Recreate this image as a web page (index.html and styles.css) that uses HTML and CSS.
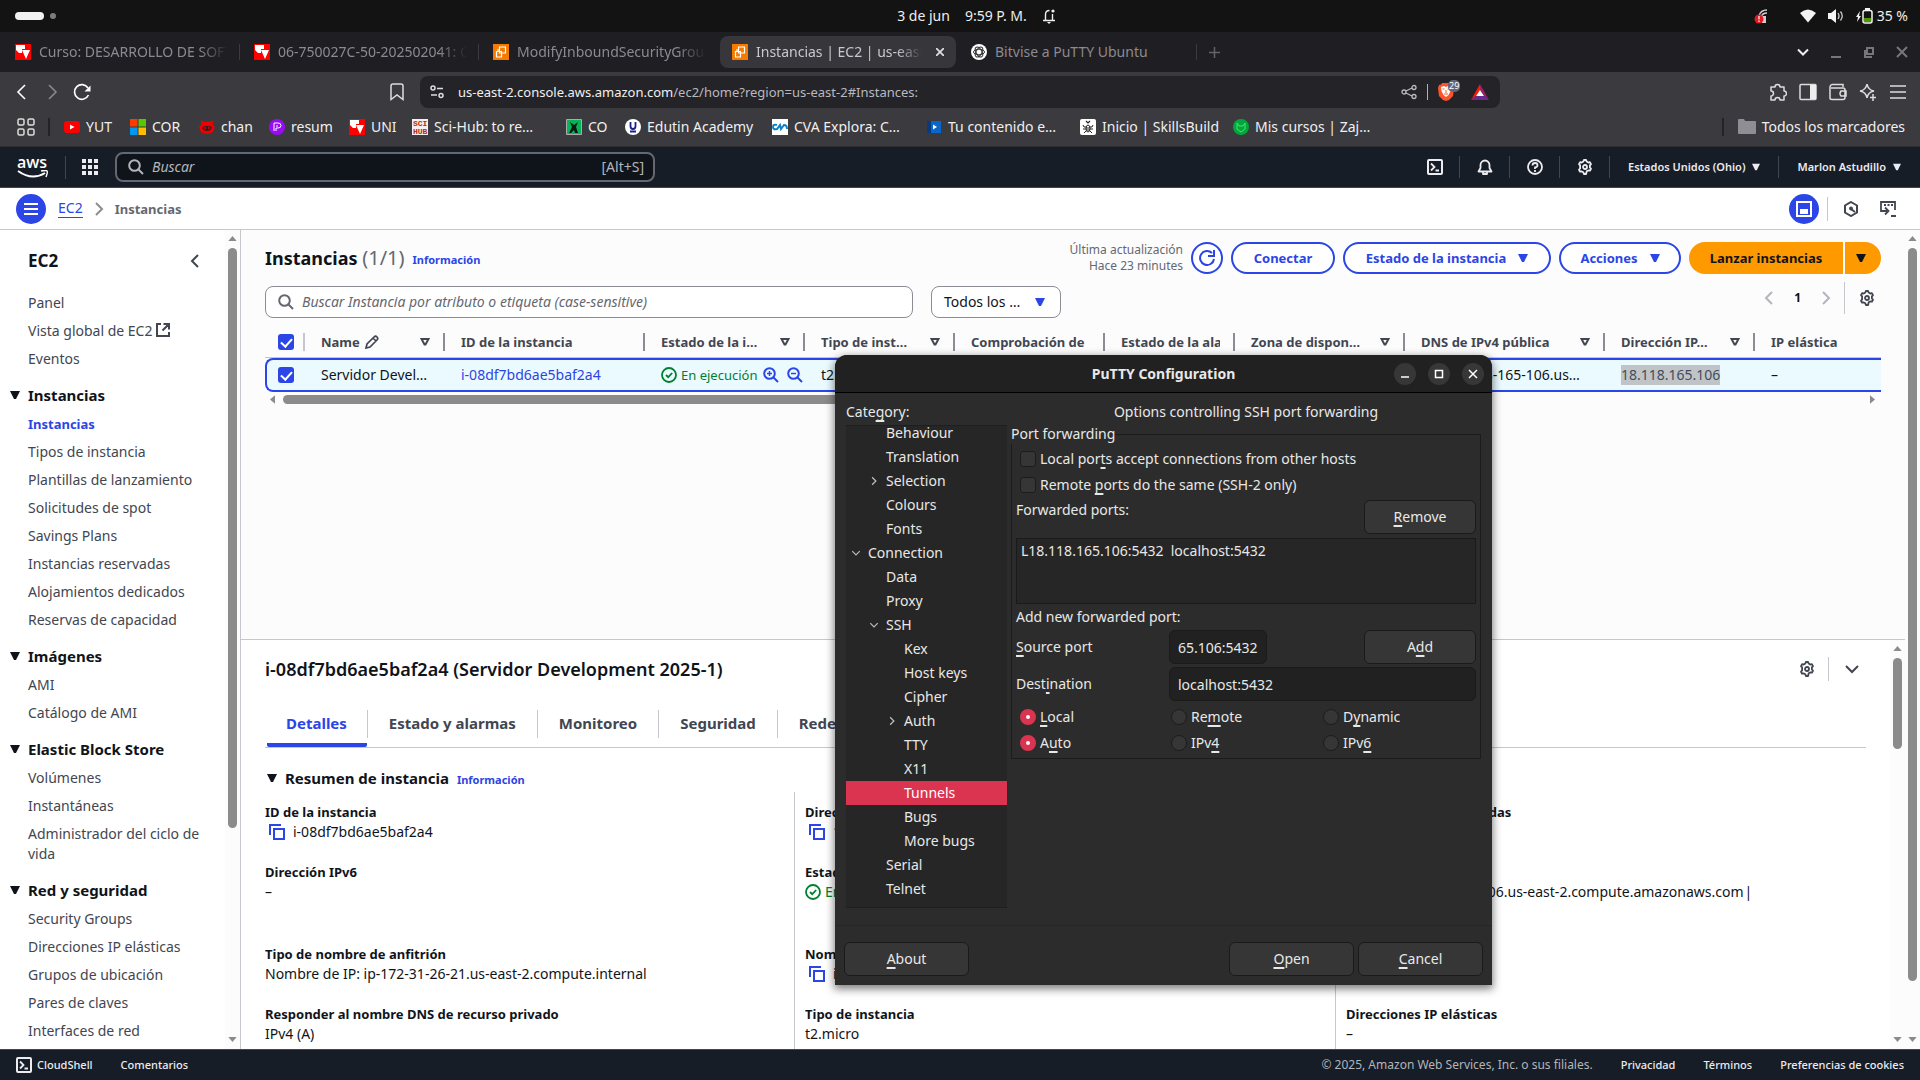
FILE: index.html
```html
<!DOCTYPE html>
<html lang="es">
<head>
<meta charset="utf-8">
<title>Instancias | EC2 | us-east-2</title>
<link rel="stylesheet" href="styles.css">
</head>
<body>
<svg class="sprite" aria-hidden="true">
  <symbol id="gear" viewBox="0 0 16 16"><path d="M6.3 2.6 6.9 1h2.2l.6 1.6 1.5.9 1.7-.3 1.1 1.9-1.1 1.3v1.2l0 .8 1.1 1.4-1.1 1.9-1.7-.3-1.5.9L9.1 15H6.9l-.6-1.7-1.5-.9-1.7.3L2 10.800l1.100-1.400V6.400L2 5.100l1.100-1.900 1.700.3z" fill="none" stroke="currentColor" stroke-width="1.8" stroke-linejoin="round"/><circle cx="8" cy="8" r="2" fill="none" stroke="currentColor" stroke-width="1.800"/></symbol>
  <symbol id="lens" viewBox="0 0 16 16"><circle cx="6.500" cy="6.500" r="5.300" fill="none" stroke="currentColor" stroke-width="2"/><path d="m10.500 10.500 4.500 4.500" stroke="currentColor" stroke-width="2"/></symbol>
  <symbol id="caret" viewBox="0 0 10 10"><path d="M0 1h10L6 9H4z" fill="currentColor"/></symbol>
  <symbol id="filter" viewBox="0 0 10 10"><path d="M1.500 2h7L5.500 7.500h-1z" fill="none" stroke="currentColor" stroke-width="2"/></symbol>
  <symbol id="left" viewBox="0 0 16 16"><path d="M11 2 5 8l6 6" fill="none" stroke="currentColor" stroke-width="2"/></symbol>
  <symbol id="right" viewBox="0 0 16 16"><path d="m5 2 6 6-6 6" fill="none" stroke="currentColor" stroke-width="2"/></symbol>
  <symbol id="down" viewBox="0 0 16 16"><path d="m2 5 6 6 6-6" fill="none" stroke="currentColor" stroke-width="2"/></symbol>
  <symbol id="copy" viewBox="0 0 16 16"><path d="M1 11V1h11" fill="none" stroke="currentColor" stroke-width="2"/><path d="M5 5h10v10H5z" fill="none" stroke="currentColor" stroke-width="2"/></symbol>
  <symbol id="ok" viewBox="0 0 16 16"><circle cx="8" cy="8" r="7" fill="none" stroke="currentColor" stroke-width="1.800"/><path d="m5 8 2.200 2.200L11.200 6" fill="none" stroke="currentColor" stroke-width="1.800"/></symbol>
  <symbol id="shell" viewBox="0 0 16 16"><rect x="1" y="1" width="14" height="14" rx="1" fill="none" stroke="currentColor" stroke-width="2"/><path d="m4 4.500 3.500 3.500L4 11.500M8.500 11.500H12" fill="none" stroke="currentColor" stroke-width="1.800"/></symbol>
  <symbol id="uv" viewBox="0 0 16 16"><path fill="#f00" d="M0 0h16v16H0z"/><path fill="#fff" d="M1 1h9v4H7v4H4L1 6zM7 6h8l-4 9z"/></symbol>
  <symbol id="ec2" viewBox="0 0 16 16"><path fill="#f47b00" d="M0 0h16v16H0z"/><path d="M6.500 3h6v6h-6zM3.500 7.500h5v5.500h-5zM5 7V5M13 5" fill="none" stroke="#fff" stroke-width="1.200"/></symbol>
  <symbol id="aleft" viewBox="0 0 6 10"><path d="M6 0v10L0 5z" fill="currentColor"/></symbol>
  <symbol id="aup" viewBox="0 0 10 6"><path d="M0 6h10L5 0z" fill="currentColor"/></symbol>
  <symbol id="adown" viewBox="0 0 10 6"><path d="M0 0h10L5 6z" fill="currentColor"/></symbol>
</svg>

<header class="desktop-bar">
  <div class="workspaces"><i class="pill"></i><i class="dot"></i></div>
  <div class="clock"><span>3 de jun</span><span>9:59 P. M.</span>
    <svg width="14" height="16" viewBox="0 0 14 16"><path d="M1 12.500h12M3.500 12V6.500C3.500 4 5 2.500 7.500 2.500M10.500 6v6" fill="none" stroke="#eee" stroke-width="1.400"/><circle cx="11" cy="3" r="1.600" fill="#eee"/><path d="M5 14h4l-2 2z" fill="#eee"/></svg></div>
  <div class="tray">
    <svg class="net" width="14" height="16" viewBox="0 0 14 16"><path d="M5 8c1-4 4-6 8-6M7 9c1-3 3-4 6-4" fill="none" stroke="#ccc" stroke-width="1.300"/><path d="M8 8h4v7H8z" fill="#ccc"/><circle cx="5" cy="11" r="4.500" fill="#e01b24"/><path d="M5 8v3.500M5 12.500V14" stroke="#fff" stroke-width="1.200"/></svg>
    <svg width="16" height="14" viewBox="0 0 16 14"><path d="M0 4q8-7 16 0L8 13.500z" fill="#f4f4f4"/></svg>
    <svg width="16" height="14" viewBox="0 0 16 14"><path d="M0 4h3l5-4v14l-5-4H0z" fill="#f4f4f4"/><path d="M10 4q2 3 0 6M12.500 2.500q3.500 4.500 0 9" fill="none" stroke="#ccc" stroke-width="1.300"/></svg>
    <span class="battery"><svg width="17" height="16" viewBox="0 0 17 16"><path d="M4 3 0 9h2l-1 5 4-6H3z" fill="#f4f4f4"/><rect x="7" y="2.500" width="9" height="12.500" rx="2" fill="none" stroke="#f4f4f4" stroke-width="1.500"/><path d="M9 0h5v2H9z" fill="#f4f4f4"/><path d="M8 10h7v4H8z" fill="#4e9a06"/></svg>35 %</span>
  </div>
</header>

<div class="tabstrip">
  <div class="tab sep"><svg width="16" height="16"><use href="#uv"/></svg><span>Curso: DESARROLLO DE SOFTWARE</span></div>
  <div class="tab sep"><svg width="16" height="16"><use href="#uv"/></svg><span>06-750027C-50-202502041: Clase</span></div>
  <div class="tab"><svg width="16" height="16"><use href="#ec2"/></svg><span>ModifyInboundSecurityGroupRules</span></div>
  <div class="tab active"><svg width="16" height="16"><use href="#ec2"/></svg><span>Instancias | EC2 | us-east-2</span><button aria-label="Cerrar"><svg width="8" height="8" viewBox="0 0 8 8"><path d="m0 0 8 8M8 0 0 8" stroke="#ddd" stroke-width="1.800"/></svg></button></div>
  <div class="tab sep last"><svg width="16" height="16" viewBox="0 0 16 16"><circle cx="8" cy="8" r="8" fill="#fff"/><g fill="none" stroke="#333"><ellipse cx="8" cy="8" rx="5.500" ry="2.800"/><ellipse cx="8" cy="8" rx="5.500" ry="2.800" transform="rotate(60 8 8)"/><ellipse cx="8" cy="8" rx="5.500" ry="2.800" transform="rotate(120 8 8)"/></g></svg><span>Bitvise a PuTTY Ubuntu</span></div>
  <button class="newtab" aria-label="Nueva pestaña"><svg width="11" height="11" viewBox="0 0 11 11"><path d="M0 5.500h11M5.500 0v11" stroke="#636268" stroke-width="1.500"/></svg></button>
  <div class="winctl">
    <svg width="12" height="12" viewBox="0 0 12 12"><path d="m1 3.500 5 5 5-5" fill="none" stroke="#eee" stroke-width="2"/></svg>
    <svg width="12" height="12" viewBox="0 0 12 12"><path d="M1 11h10" stroke="#77767b" stroke-width="2"/></svg>
    <svg width="12" height="12" viewBox="0 0 12 12"><path d="M4 2h6v6H4zM2 4v7h7" fill="none" stroke="#77767b" stroke-width="2"/></svg>
    <svg width="12" height="12" viewBox="0 0 12 12"><path d="m1 1 10 10M11 1 1 11" stroke="#77767b" stroke-width="2"/></svg>
  </div>
</div>

<div class="chrome">
  <div class="toolbar">
    <div class="navbtns">
      <svg width="18" height="18" viewBox="0 0 18 18"><path d="M12 2 5 9l7 7" fill="none" stroke="#fff" stroke-width="1.600"/></svg>
      <svg width="18" height="18" viewBox="0 0 18 18"><path d="m6 2 7 7-7 7" fill="none" stroke="#89888d" stroke-width="1.600"/></svg>
      <svg width="18" height="18" viewBox="0 0 18 18"><path d="M15.500 12A7.300 7.300 0 1 1 15 5" fill="none" stroke="#fff" stroke-width="1.700"/><path d="M17.500 2.500v6h-6z" fill="#fff"/></svg>
    </div>
    <svg class="mark" width="14" height="18" viewBox="0 0 14 18"><path d="M1 3a2 2 0 0 1 2-2h8a2 2 0 0 1 2 2v13.500l-6-4.500-6 4.500z" fill="none" stroke="#ddd" stroke-width="1.500"/></svg>
    <div class="urlbar">
      <svg width="14" height="14" viewBox="0 0 14 14"><g fill="none" stroke="#ddd" stroke-width="1.500"><circle cx="3" cy="3" r="2"/><path d="M7 3.500h6M1 10h6"/><circle cx="11" cy="10.500" r="2"/></g></svg>
      <span class="url"><b>us-east-2.console.aws.amazon.com</b>/ec2/home?region=us-east-2#Instances:</span>
      <svg width="16" height="16" viewBox="0 0 16 16"><g fill="none" stroke="#bbb" stroke-width="1.300"><circle cx="3" cy="8" r="2"/><circle cx="13" cy="3.500" r="2"/><circle cx="13" cy="12.500" r="2"/><path d="m5 7 6-3M5 9l6 3"/></g></svg>
      <i class="bar"></i>
      <span class="shield"><svg width="16" height="18" viewBox="0 0 16 18"><path d="m4 0h8l1 1.500 2 .500 1 3-1 8-4 4-3 1-3-1-4-4L0 5l1-3 2-.500z" fill="#fb542b"/><path d="m3 4 3-1 2 1 2-1 3 1-.500 4-2 4-2.500 2-2.500-2-2-4z" fill="#fff"/><path d="M4.500 6h2M9.500 6h2M8 7v3M6 11h4" stroke="#fb542b"/></svg><em>29</em></span>
      <svg width="18" height="16" viewBox="0 0 18 16"><path d="M9 0v6L5 12l-5 4z" fill="#ff1a00"/><path d="M9 0v6l4.500 6L18 16z" fill="#9e1f63"/><path d="M0 16 5 11.500h8L18 16z" fill="#662d91"/><path d="m9 6 4 6H5z" fill="#fff"/></svg>
    </div>
    <div class="ext">
      <svg width="18" height="18" viewBox="0 0 18 18"><path d="M2 4h4a2 2 0 1 1 5 0h4v4a2.300 2.300 0 1 1 0 5v4h-4a2 2 0 0 0-5 0H2v-4a2.300 2.300 0 0 0 0-5z" fill="none" stroke="#ddd" stroke-width="1.500" stroke-linejoin="round"/></svg>
      <svg width="18" height="18" viewBox="0 0 18 18"><rect x="1" y="1.500" width="16" height="15" rx="1" fill="none" stroke="#ddd" stroke-width="1.500"/><path d="M11 2h6v14h-6z" fill="#eee"/></svg>
      <svg width="18" height="18" viewBox="0 0 18 18"><path d="M14 4V1.500H3Q1 2 1 4v11q0 1.500 2 1.500h11q2 0 2-2V7q0-2-2-2H2M17 8h-5q-2 2.500 0 5h5z" fill="none" stroke="#ddd" stroke-width="1.500"/></svg>
      <svg width="18" height="18" viewBox="0 0 18 18"><path d="M8 1q1 6 7 7-6 1-7 7-1-6-7-7 6-1 7-7z" fill="none" stroke="#ddd" stroke-width="1.500"/><path d="M14 11v7M11 14.500h6" stroke="#ddd" stroke-width="1.500"/></svg>
      <svg width="18" height="18" viewBox="0 0 18 18"><path d="M1 3h16M1 9h16M1 15h16" stroke="#ddd" stroke-width="1.600"/></svg>
    </div>
  </div>
  <nav class="bookmarks">
    <svg class="apps" width="18" height="18" viewBox="0 0 18 18"><g fill="none" stroke="#ddd" stroke-width="1.500"><rect x="1" y="1" width="6" height="6" rx="1.500"/><rect x="11" y="1" width="6" height="6" rx="1.500"/><rect x="1" y="11" width="6" height="6" rx="1.500"/><rect x="11" y="11" width="6" height="6" rx="1.500"/></g></svg>
    <div class="marks">
    <a href="#"><svg width="16" height="16" viewBox="0 0 16 16"><rect y="2" width="16" height="12" rx="3" fill="#f00"/><path d="m6 5.500 4.500 2.500L6 10.500z" fill="#fff"/></svg>YUT</a>
    <a href="#"><svg width="16" height="16" viewBox="0 0 16 16"><path fill="#ff3a00" d="M0 0h7.500v7.500H0z"/><path fill="#58c600" d="M8.500 0H16v7.500H8.500z"/><path fill="#0098f0" d="M0 8.500h7.500V16H0z"/><path fill="#ffbc00" d="M8.500 8.500H16V16H8.500z"/></svg>COR</a>
    <a href="#"><svg width="16" height="16" viewBox="0 0 16 16"><path d="M1 2q3-1 4 1 3-1 6 0 1-2 4-1-2 2-1 4 3 2 1 4 0 3-3 4-4 2-8 0-3-1-3-4-2-2 1-4 1-2-1-4z" fill="#e00"/><path d="M3 8q5-2 10 0-1 4-5 4T3 8z" fill="#3a1a20"/><circle cx="6" cy="9" r="1" fill="#e00"/><circle cx="10" cy="9" r="1" fill="#e00"/></svg>chan</a>
    <a href="#"><svg width="16" height="16" viewBox="0 0 16 16"><circle cx="8" cy="8" r="8" fill="#9a0bf5"/><path d="M5 12V4h4q3 0 3 2.500T9 9H7v3M7 7h2" fill="none" stroke="#fff"/></svg>resum</a>
    <a href="#"><svg width="16" height="16"><use href="#uv"/></svg>UNI</a>
    <a href="#"><svg width="16" height="16" viewBox="0 0 16 16"><path fill="#f7eeec" d="M0 0h16v16H0z"/><g fill="#b02a25" font-family="Liberation Mono" font-size="8" font-weight="bold"><text x="1" y="7">SCI</text><text x="1" y="15">HUB</text></g></svg>Sci-Hub: to re…</a>
    <a href="#"><svg width="16" height="16" viewBox="0 0 16 16"><path fill="#08b35a" stroke="#aaa" d="M.5.5h15v15H.5z"/><path d="m4 3 4 3 4-3-2 5 2 6H9l-1-3-3 3H3l3-6z" fill="#0b1a12"/></svg>CO</a>
    <a href="#"><svg width="16" height="16" viewBox="0 0 16 16"><circle cx="8" cy="8" r="8" fill="#fff"/><path d="M5.500 3v4q0 3 2.500 3t2.500-3V3M5 12.500h6" fill="none" stroke="#1b1f8a" stroke-width="1.800"/></svg>Edutin Academy</a>
    <a href="#"><svg width="16" height="16" viewBox="0 0 16 16"><path fill="#fff" d="M0 0h16v16H0z"/><path d="M5 6Q1 5 1 8t4 2l3-4 1 4 3-4q3 0 3 4" fill="none" stroke="#1080c8" stroke-width="2"/></svg>CVA Explora: C…</a>
    <a href="#"><svg width="16" height="16" viewBox="0 0 16 16"><path fill="#0a66c8" d="M1 2h14v12H1z"/><path fill="#053c80" d="M1 2h4v12H1z"/><path d="m7 5.500 4 2.500-4 2.500z" fill="#fff"/></svg>Tu contenido e…</a>
    <a href="#"><svg width="16" height="16" viewBox="0 0 16 16"><rect width="16" height="16" rx="2" fill="#fff"/><g fill="none" stroke="#222"><path d="m6 2 2 2 2-2" stroke-width="1.200"/><ellipse cx="8" cy="9.500" rx="2" ry="3.500"/><path d="M6 8H4L3 6M10 8h2l1-2M6 10H3M10 10h3M6 12l-2 2M10 12l2 2M6 9h4M6 11h4"/></g></svg>Inicio | SkillsBuild</a>
    <a href="#"><svg width="16" height="16" viewBox="0 0 16 16"><circle cx="8" cy="8" r="8" fill="#00a83a"/><path d="M4 4l2 3h4l2-3v6l-4 3-4-3z" fill="none" stroke="#4be07c"/></svg>Mis cursos | Zaj…</a>
    </div>
    <a class="allmarks" href="#"><svg width="18" height="16" viewBox="0 0 18 16"><path d="M0 1q0-1 1-1h5l1 2h10q1 0 1 1v11q0 1-1 1H1q-1 0-1-1z" fill="#8f8e94"/></svg>Todos los marcadores</a>
  </nav>
</div>

<header class="awsnav">
  <a class="logo" href="#" aria-label="aws"><span>aws</span><svg width="32" height="9" viewBox="0 0 32 9"><path d="M1 1q14 10 27 2" fill="none" stroke="#fff" stroke-width="2"/><path d="M24 1q5-1 6 0t-1 6" fill="none" stroke="#fff" stroke-width="1.500"/></svg></a>
  <svg class="waffle" width="16" height="16" viewBox="0 0 16 16"><path d="M0 0h4v4H0zM6 0h4v4H6zM12 0h4v4h-4zM0 6h4v4H0zM6 6h4v4H6zM12 6h4v4h-4zM0 12h4v4H0zM6 12h4v4H6zM12 12h4v4h-4z" fill="#ebebf0"/></svg>
  <label class="awssearch"><svg width="16" height="16"><use href="#lens"/></svg><input type="text" placeholder="Buscar" aria-label="Buscar"><span>[Alt+S]</span></label>
  <div class="awsright">
    <button aria-label="CloudShell"><svg width="16" height="16"><use href="#shell"/></svg></button>
    <button aria-label="Notificaciones"><svg width="16" height="16" viewBox="0 0 16 16"><path d="M1.500 12.500h13L12.500 9V6a4.500 4.500 0 0 0-9 0v3zM6 13v2h4v-2" fill="none" stroke="currentColor" stroke-width="1.800" stroke-linejoin="round"/></svg></button>
    <button aria-label="Ayuda"><svg width="16" height="16" viewBox="0 0 16 16"><circle cx="8" cy="8" r="7" fill="none" stroke="currentColor" stroke-width="1.800"/><path d="M5.500 6.500Q5.500 4 8 4t2.500 2.200Q10.500 8 8 8.500V10M8 11v2" fill="none" stroke="currentColor" stroke-width="1.800"/></svg></button>
    <button aria-label="Configuración"><svg width="16" height="16"><use href="#gear"/></svg></button>
    <button class="wide">Estados Unidos (Ohio)<svg width="8" height="8"><use href="#caret"/></svg></button>
    <button class="wide">Marlon Astudillo<svg width="8" height="8"><use href="#caret"/></svg></button>
  </div>
</header>

<div class="crumbs">
  <button class="round" aria-label="Menú"><svg width="16" height="16" viewBox="0 0 16 16"><path d="M1 3h14M1 8h14M1 13h14" stroke="#fff" stroke-width="2"/></svg></button>
  <a href="#">EC2</a><svg width="16" height="16"><use href="#right"/></svg><b>Instancias</b>
  <div class="crumbtools">
    <button class="round" aria-label="Panel"><svg width="16" height="16" viewBox="0 0 16 16"><path d="M1 1h14v14H1z" fill="none" stroke="#fff" stroke-width="2"/><path d="M4 8h8v5H4z" fill="#fff"/></svg></button>
    <i></i>
    <svg width="16" height="16" viewBox="0 0 16 16"><path d="m8 1 6 3.500v7L8 15l-6-3.500v-7z" fill="none" stroke="currentColor" stroke-width="2"/><circle cx="8" cy="7.500" r="2" fill="currentColor"/><path d="m8 8 4 3" stroke="currentColor" stroke-width="2"/></svg>
    <svg width="18" height="16" viewBox="0 0 18 16"><path d="M5 10H2V1h14v8M3 10h5M6 6.500 9.500 10 6 13.500M12 15h5" fill="none" stroke="currentColor" stroke-width="1.800"/><path d="M5 4h2M8.500 4h2M12 4h2" stroke="currentColor" stroke-width="1.800"/></svg>
  </div>
</div>

<div class="work">
  <aside class="side">
    <nav>
      <div class="sidehead"><h2>EC2</h2><svg width="16" height="16"><use href="#left"/></svg></div>
      <ul><li><a href="#">Panel</a></li><li><a href="#">Vista global de EC2 <svg width="14" height="14" viewBox="0 0 14 14"><path d="M5 1H1v12h12V9M7.500 1H13v5.500M13 1 6.500 7.500" fill="none" stroke="currentColor" stroke-width="2"/></svg></a></li><li><a href="#">Eventos</a></li></ul>
      <h3><svg width="10" height="10"><use href="#caret"/></svg>Instancias</h3>
      <ul><li><a class="current" href="#">Instancias</a></li><li><a href="#">Tipos de instancia</a></li><li><a href="#">Plantillas de lanzamiento</a></li><li><a href="#">Solicitudes de spot</a></li><li><a href="#">Savings Plans</a></li><li><a href="#">Instancias reservadas</a></li><li><a href="#">Alojamientos dedicados</a></li><li><a href="#">Reservas de capacidad</a></li></ul>
      <h3><svg width="10" height="10"><use href="#caret"/></svg>Imágenes</h3>
      <ul><li><a href="#">AMI</a></li><li><a href="#">Catálogo de AMI</a></li></ul>
      <h3><svg width="10" height="10"><use href="#caret"/></svg>Elastic Block Store</h3>
      <ul><li><a href="#">Volúmenes</a></li><li><a href="#">Instantáneas</a></li><li><a href="#">Administrador del ciclo de<br>vida</a></li></ul>
      <h3><svg width="10" height="10"><use href="#caret"/></svg>Red y seguridad</h3>
      <ul><li><a href="#">Security Groups</a></li><li><a href="#">Direcciones IP elásticas</a></li><li><a href="#">Grupos de ubicación</a></li><li><a href="#">Pares de claves</a></li><li><a href="#">Interfaces de red</a></li></ul>
    </nav>
    <div class="vscroll side-sb"><svg width="9" height="5"><use href="#aup"/></svg><i></i><svg width="9" height="5"><use href="#adown"/></svg></div>
  </aside>

  <main>
    <section class="list">
      <div class="listhead">
        <h1>Instancias <span>(1/1)</span></h1><a class="info" href="#">Información</a>
        <div class="actions">
          <p>Última actualización<br>Hace 23 minutes</p>
          <button class="btn refresh" aria-label="Actualizar"><svg width="18" height="18" viewBox="0 0 18 18"><path d="M16 10a7 7 0 1 1-2-6" fill="none" stroke="currentColor" stroke-width="2"/><path d="M16 1v6h-6" fill="none" stroke="currentColor" stroke-width="2"/></svg></button>
          <button class="btn connect">Conectar</button>
          <button class="btn state">Estado de la instancia<svg width="10" height="10"><use href="#caret"/></svg></button>
          <button class="btn act">Acciones<svg width="10" height="10"><use href="#caret"/></svg></button>
          <div class="launch"><button>Lanzar instancias</button><button aria-label="Más"><svg width="10" height="10"><use href="#caret"/></svg></button></div>
        </div>
      </div>
      <div class="filters">
        <label class="find"><svg width="16" height="16"><use href="#lens"/></svg><input type="text" aria-label="Buscar instancia" placeholder="Buscar Instancia por atributo o etiqueta (case-sensitive)"></label>
        <button class="pick" aria-haspopup="listbox">Todos los …<svg width="10" height="10"><use href="#caret"/></svg></button>
        <div class="pager"><svg width="16" height="16"><use href="#left"/></svg><b>1</b><svg width="16" height="16"><use href="#right"/></svg><i></i><svg class="dark" width="16" height="16"><use href="#gear"/></svg></div>
      </div>
      <table>
        <colgroup><col class="w40"><col class="w140"><col class="w200"><col class="w160"><col class="w150"><col class="w150"><col class="w130"><col class="w170"><col class="w200"><col class="w150"><col></colgroup>
        <thead><tr>
          <th class="pale"><input type="checkbox" checked aria-label="Seleccionar todo"></th>
          <th><div>Name <svg class="pen" width="14" height="14" viewBox="0 0 14 14"><path d="m1 13 1-4 7-7q1.500-1.500 3 0t0 3l-7 7zM8 3l3 3" fill="none" stroke="currentColor" stroke-width="1.700"/></svg><svg class="f" width="10" height="10"><use href="#filter"/></svg></div></th>
          <th><div>ID de la instancia</div></th>
          <th><div>Estado de la i…<svg class="f" width="10" height="10"><use href="#filter"/></svg></div></th>
          <th><div>Tipo de inst…<svg class="f" width="10" height="10"><use href="#filter"/></svg></div></th>
          <th><div>Comprobación de</div></th>
          <th><div><span class="clip">Estado de la alarma</span></div></th>
          <th><div>Zona de dispon…<svg class="f" width="10" height="10"><use href="#filter"/></svg></div></th>
          <th><div>DNS de IPv4 pública<svg class="f" width="10" height="10"><use href="#filter"/></svg></div></th>
          <th><div>Dirección IP…<svg class="f" width="10" height="10"><use href="#filter"/></svg></div></th>
          <th><div>IP elástica</div></th>
        </tr></thead>
        <tbody><tr>
          <td><input type="checkbox" checked aria-label="Servidor Development"></td>
          <td>Servidor Devel…</td><td><a href="#">i-08df7bd6ae5baf2a4</a></td>
          <td><div class="run"><svg width="16" height="16"><use href="#ok"/></svg>En ejecución<svg class="z" width="16" height="16" viewBox="0 0 16 16"><use href="#lens"/><path d="M4 6.500h5M6.500 4v5" stroke="currentColor" stroke-width="1.500"/></svg><svg class="z" width="16" height="16" viewBox="0 0 16 16"><use href="#lens"/><path d="M4 6.500h5" stroke="currentColor" stroke-width="1.500"/></svg></div></td>
          <td>t2.micro</td><td></td><td></td><td>us-east-2c</td><td>ec2-18-118-165-106.us…</td><td><mark>18.118.165.106</mark></td><td>–</td>
        </tr></tbody>
      </table>
      <div class="hscroll"><svg width="5" height="9"><use href="#aleft"/></svg><i></i><svg class="flip" width="5" height="9"><use href="#aleft"/></svg></div>
    </section>

    <section class="split">
      <div class="detail">
        <div class="dhead"><h2>i-08df7bd6ae5baf2a4 (Servidor Development 2025-1)</h2><svg width="16" height="16"><use href="#gear"/></svg><i></i><svg width="16" height="16"><use href="#down"/></svg></div>
        <div class="dtabs"><a class="on" href="#">Detalles</a><a href="#">Estado y alarmas</a><a href="#">Monitoreo</a><a href="#">Seguridad</a><a href="#">Redes</a></div>
        <h3><svg width="10" height="10"><use href="#caret"/></svg>Resumen de instancia<a class="info" href="#">Información</a></h3>
        <div class="facts">
          <dl>
            <div><dt>ID de la instancia</dt><dd><svg width="16" height="16"><use href="#copy"/></svg>i-08df7bd6ae5baf2a4</dd></div>
            <div class="tall"><dt>Dirección IPv6</dt><dd>–</dd></div>
            <div><dt>Tipo de nombre de anfitrión</dt><dd>Nombre de IP: ip-172-31-26-21.us-east-2.compute.internal</dd></div>
            <div><dt>Responder al nombre DNS de recurso privado</dt><dd>IPv4 (A)</dd></div>
          </dl>
          <dl>
            <div><dt>Dirección IPv4 pública</dt><dd><svg width="16" height="16"><use href="#copy"/></svg>18.118.165.106</dd></div>
            <div class="tall"><dt>Estado de la instancia</dt><dd class="green"><svg width="16" height="16"><use href="#ok"/></svg>En ejecución</dd></div>
            <div><dt>Nombre DNS de IP privada</dt><dd><svg width="16" height="16"><use href="#copy"/></svg>ip-172-31-26-21.us-east-2.compute.internal</dd></div>
            <div><dt>Tipo de instancia</dt><dd>t2.micro</dd></div>
          </dl>
          <dl>
            <div><dt>Direcciones IPv4 privadas</dt><dd><svg width="16" height="16"><use href="#copy"/></svg>172.31.26.21</dd></div>
            <div class="tall"><dt>DNS público</dt><dd class="dns"><svg width="16" height="16"><use href="#copy"/></svg>ec2-18-118-165-106.us-east-2.compute.amazonaws.com<span>|</span></dd></div>
            <div><dt></dt><dd></dd></div>
            <div><dt>Direcciones IP elásticas</dt><dd>–</dd></div>
          </dl>
        </div>
      </div>
      <div class="vscroll split-sb"><svg width="9" height="5"><use href="#aup"/></svg><i></i><svg width="9" height="5"><use href="#adown"/></svg></div>
    </section>
  </main>
  <div class="vscroll main-sb"><svg width="9" height="5"><use href="#aup"/></svg><i></i><svg width="9" height="5"><use href="#adown"/></svg></div>
</div>

<footer>
  <a href="#"><svg width="16" height="16"><use href="#shell"/></svg>CloudShell</a><a href="#">Comentarios</a>
  <span>© 2025, Amazon Web Services, Inc. o sus filiales.</span><a href="#">Privacidad</a><a href="#">Términos</a><a href="#">Preferencias de cookies</a>
</footer>

<div class="putty" role="dialog" aria-labelledby="ptitle">
  <div class="ptitle"><b id="ptitle">PuTTY Configuration</b>
    <button aria-label="Minimizar"><svg width="10" height="10" viewBox="0 0 10 10"><path d="M1 8h8" stroke="#fff" stroke-width="1.500"/></svg></button><button aria-label="Maximizar"><svg width="10" height="10" viewBox="0 0 10 10"><path d="M1.500 1.500h7v7h-7z" fill="none" stroke="#fff" stroke-width="1.500"/></svg></button><button aria-label="Cerrar"><svg width="10" height="10" viewBox="0 0 10 10"><path d="m1 1 8 8M9 1 1 9" stroke="#fff" stroke-width="1.500"/></svg></button></div>
  <div class="pbody">
    <div class="pcat">
      <p>Cate<u>g</u>ory:</p>
      <ul>
        <li class="l2">Behaviour</li><li class="l2">Translation</li><li class="l2"><svg width="10" height="10"><use href="#right"/></svg>Selection</li><li class="l2">Colours</li><li class="l2">Fonts</li>
        <li class="l1"><svg width="10" height="10"><use href="#down"/></svg>Connection</li><li class="l2">Data</li><li class="l2">Proxy</li><li class="l2"><svg width="10" height="10"><use href="#down"/></svg>SSH</li>
        <li class="l3">Kex</li><li class="l3">Host keys</li><li class="l3">Cipher</li><li class="l3"><svg width="10" height="10"><use href="#right"/></svg>Auth</li><li class="l3">TTY</li><li class="l3">X11</li><li class="l3 sel">Tunnels</li><li class="l3">Bugs</li><li class="l3">More bugs</li>
        <li class="l2">Serial</li><li class="l2">Telnet</li><li class="l2">Rlogin</li>
      </ul>
    </div>
    <form class="pform">
      <p>Options controlling SSH port forwarding</p>
      <fieldset>
        <legend>Port forwarding</legend>
        <label class="opt"><input type="checkbox"><span>Local por<u>t</u>s accept connections from other hosts</span></label>
        <label class="opt"><input type="checkbox"><span>Remote <u>p</u>orts do the same (SSH-2 only)</span></label>
        <div class="prow fwd"><span>Forwarded ports:</span><button type="button"><span><u>R</u>emove</span></button></div>
        <div class="plist">L18.118.165.106:5432&nbsp; localhost:5432</div>
        <p class="addnew">Add new forwarded port:</p>
        <div class="prow"><label for="sp"><u>S</u>ource port</label><input class="short" id="sp" type="text" value="65.106:5432"><button type="button"><span>A<u>d</u>d</span></button></div>
        <div class="prow"><label for="de">Dest<u>i</u>nation</label><input id="de" type="text" value="localhost:5432"></div>
        <div class="radios">
          <label class="opt"><input type="radio" name="dir" checked><span><u>L</u>ocal</span></label><label class="opt"><input type="radio" name="dir"><span>Re<u>m</u>ote</span></label><label class="opt"><input type="radio" name="dir"><span>D<u>y</u>namic</span></label>
          <label class="opt"><input type="radio" name="ip" checked><span>A<u>u</u>to</span></label><label class="opt"><input type="radio" name="ip"><span>IPv<u>4</u></span></label><label class="opt"><input type="radio" name="ip"><span>IPv<u>6</u></span></label>
        </div>
      </fieldset>
    </form>
  </div>
  <div class="pfoot"><button><span><u>A</u>bout</span></button><button class="open"><span><u>O</u>pen</span></button><button><span><u>C</u>ancel</span></button></div>
</div>
</body>
</html>
```
FILE: styles.css
```css
* { box-sizing: border-box; margin: 0; padding: 0; }
:root { --blue: #2b45e6; --ink: #0f141a; --grey: #424650; --line: #c6c6cd; --aws: #161d26; }
body { display: flex; flex-direction: column; height: 100vh; overflow: hidden; position: relative; font: 13px/20px "Noto Sans", "Open Sans", sans-serif; color: var(--ink); background: #fff; }
button, input { font: inherit; color: inherit; }
button { background: none; border: 0; white-space: nowrap; }
a { color: inherit; text-decoration: none; }
ul { list-style: none; }
svg { flex: none; display: block; }
.sprite { position: absolute; width: 0; height: 0; }

/* desktop top bar */
.desktop-bar { display: grid; grid-template-columns: 1fr auto 1fr; align-items: center; height: 32px; flex: none; background: #131313; color: #eee; font-size: 14px; padding: 0 12px 0 15px; }
.workspaces { display: flex; align-items: center; gap: 6px; }
.pill { width: 29px; height: 8px; border-radius: 4px; background: #f2f2f2; }
.dot { width: 6px; height: 6px; border-radius: 3px; background: #7d7d7d; }
.clock { display: flex; align-items: center; gap: 15px; padding-left: 30px; }
.tray { display: flex; align-items: center; justify-content: flex-end; gap: 12px; }
.net { margin-right: 20px; }
.battery { display: flex; align-items: center; gap: 4px; }

/* browser tabs */
.tabstrip { display: flex; align-items: center; height: 40px; flex: none; background: #1f1e23; color: #8b8a90; font-size: 14px; padding-left: 1px; }
.tab { display: flex; align-items: center; gap: 8px; width: 239px; height: 32px; padding: 0 12px 0 14px; position: relative; }
.tab span { flex: 1; overflow: hidden; white-space: nowrap; -webkit-mask-image: linear-gradient(90deg, #000 85%, transparent); mask-image: linear-gradient(90deg, #000 85%, transparent); }
.tab.sep::after { content: ""; position: absolute; right: 0; top: 8px; height: 16px; border-right: 1px solid #3b3a40; }
.tab.active { width: 236px; margin-left: 2px; padding: 0 6px 0 12px; background: #37363b; border-radius: 8px; color: #c9c8ce; }
.tab.active button { width: 20px; display: grid; place-items: center; }
.tab.last { width: 241px; padding: 0 15px; }
.tab.last span { -webkit-mask-image: none; mask-image: none; }
.newtab { padding: 12px; }
.winctl { display: flex; gap: 21px; margin-left: auto; padding-right: 12px; }

/* browser toolbar and bookmarks */
.chrome { flex: none; background: #3b3a3f; color: #f0f0f0; border-bottom: 1px solid #2c2b30; font-size: 14px; }
.toolbar { display: flex; align-items: center; height: 40px; padding: 0 13px; }
.navbtns { display: flex; gap: 12px; width: 377px; }
.mark { margin-right: 16px; }
.urlbar { flex: 0 1 1080px; height: 32px; display: flex; align-items: center; gap: 10px; background: #242328; border-radius: 8px; padding: 0 11px 0 10px; }
.url { flex: 1; padding-left: 4px; color: #b9b8be; white-space: nowrap; font-size: 13px; }
.url b { font-weight: 400; color: #f0f0f0; }
.bar { width: 1px; height: 16px; background: #b0b0b0; }
.shield { position: relative; margin-right: 7px; }
.shield em { position: absolute; left: 10px; top: -3px; padding: 0 1px; border-radius: 5px; background: #636578; color: #fff; font: 9px/12px "Noto Sans", sans-serif; }
.ext { display: flex; gap: 12px; margin-left: auto; }
.bookmarks { display: flex; align-items: center; height: 34px; padding: 0 15px 4px 17px; }
.apps { margin-right: 29px; }
.marks { display: grid; grid-template-columns: 66px 69px 70px 80px 63px 154px 59px 147px 154px 154px 153px 140px; position: relative; }
.marks::before { content: ""; position: absolute; left: -16px; top: 1px; height: 18px; border-left: 2px solid #242328; }
.bookmarks a { display: flex; align-items: center; gap: 6px; white-space: nowrap; }
.bookmarks .allmarks { margin-left: auto; border-left: 2px solid #242328; padding-left: 14px; line-height: 18px; }

/* console navigation */
.awsnav { display: flex; align-items: center; height: 41px; flex: none; background: var(--aws); border-bottom: 1px solid #424650; color: #ebebf0; }
.logo { width: 66px; padding-left: 17px; border-right: 1px solid #424650; color: #fff; }
.logo span { display: block; font: 600 16px/12px "Open Sans", sans-serif; }
.logo svg { margin-top: 2px; }
.waffle { margin: 0 17px 0 16px; }
.awssearch { display: flex; align-items: center; gap: 8px; width: 540px; height: 30px; border: 2px solid #656871; border-radius: 8px; background: var(--ink); padding: 0 9px 0 11px; color: #b4b4bb; font-size: 14px; }
.awssearch input { flex: 1; background: none; border: 0; outline: 0; }
input::placeholder { font-style: italic; color: inherit; opacity: 1; }
.awsright { display: flex; align-items: center; margin-left: auto; font-size: 11px; font-weight: 600; }
.awsright button { width: 50px; height: 22px; display: grid; place-items: center; border-right: 1px solid #424650; }
.awsright .wide { width: auto; display: flex; align-items: center; gap: 7px; padding: 0 18px; }
.awsright .wide:last-child { border: 0; padding-right: 19px; }

.crumbs { display: flex; align-items: center; gap: 9px; height: 42px; flex: none; padding: 0 23px 0 16px; border-bottom: 1px solid var(--line); color: #656871; }
.crumbs svg { color: #8c8c94; }
.crumbs a { color: var(--blue); font-size: 14px; line-height: 18px; border-bottom: 1px solid var(--blue); margin-left: 3px; }
.crumbs > svg { margin: 0 -1px; }
.round { width: 30px; height: 30px; border-radius: 50%; background: var(--blue); display: grid; place-items: center; }
.crumbtools { display: flex; align-items: center; gap: 20px; margin-left: auto; }
.crumbtools > svg { color: var(--grey); }
.crumbtools i { height: 24px; border-left: 1px solid var(--line); margin: 0 -5px 0 -12px; }

.work { flex: 1; min-height: 0; display: flex; }

/* scroll bars */
.vscroll { flex: none; width: 15px; display: flex; flex-direction: column; align-items: center; justify-content: space-between; padding: 6px 0 7px; color: #8b8b8b; background: #fcfcfc; }
.vscroll i { width: 9px; border-radius: 5px; background: #8b8b8b; margin: 7px 0 auto; }
.side-sb i { height: 72%; }
.main-sb i { height: 91%; }
.split-sb i { height: 23%; }

.side { flex: none; width: 241px; display: flex; border-right: 1px solid var(--line); overflow: hidden; }
.side nav { flex: 1; padding: 19px 0 0 28px; color: var(--grey); white-space: nowrap; overflow: hidden; font-size: 14px; }
.sidehead { display: flex; justify-content: space-between; align-items: center; padding-right: 22px; margin-bottom: 20px; color: var(--grey); }
.sidehead h2 { font-size: 17px; line-height: 24px; color: var(--ink); }
.side li + li { margin-top: 8px; }
.side li a { display: block; }
.side li svg { display: inline-block; vertical-align: -1px; }
.side h3 { display: flex; align-items: center; gap: 8px; margin: 15px 0 8px -18px; font-size: 15px; line-height: 22px; color: var(--ink); }
.side .current { color: var(--blue); font-size: 13px; font-weight: 700; }

main { flex: 1; min-width: 0; display: flex; flex-direction: column; }
.list { flex: 0 0 50%; background: #fcfcfd; padding: 12px 24px 0; border-bottom: 1px solid var(--line); }
.listhead { display: flex; align-items: center; height: 32px; }
h1 { font-size: 18px; line-height: 24px; }
h1 span { font-size: 20px; font-weight: 400; color: #656871; }
.info { color: var(--blue); font-size: 11px; font-weight: 700; margin: 4px 0 0 8px; }
.actions { display: flex; gap: 8px; margin-left: auto; }
.actions p { font-size: 12px; line-height: 16px; text-align: right; color: #656871; }
.btn { height: 32px; border: 2px solid var(--blue); border-radius: 16px; color: var(--blue); font-weight: 700; background: #fff; display: flex; align-items: center; justify-content: center; gap: 12px; }
.refresh { width: 32px; }
.connect { width: 104px; }
.state { width: 208px; }
.act { width: 122px; }
.launch { display: flex; gap: 2px; font-weight: 700; }
.launch button { width: 154px; background: #ff9900; border-radius: 16px 0 0 16px; }
.launch button + button { width: 36px; padding-right: 4px; border-radius: 0 16px 16px 0; display: grid; place-items: center; }
.filters { display: flex; align-items: center; height: 32px; margin-top: 12px; font-size: 14px; }
.find, .pick { height: 32px; border: 1px solid #8c8c94; border-radius: 8px; background: #fff; display: flex; align-items: center; }
.find { width: 648px; gap: 8px; padding: 0 12px; color: #656871; }
.find input { flex: 1; border: 0; outline: 0; background: none; }
.pick { width: 130px; margin-left: 18px; padding: 0 15px 0 12px; justify-content: space-between; }
.pick svg { color: var(--blue); }
.pager { display: flex; align-items: center; margin: -8px 6px 0 auto; gap: 17px; color: #b4b4bb; }
.pager b { color: var(--ink); font-size: 12px; }
.pager i { height: 32px; border-left: 1px solid var(--line); margin: 0 -3px 0 -7px; }
.dark { color: var(--grey); }

table { width: 100%; table-layout: fixed; border-collapse: separate; border-spacing: 0; margin-top: 8px; white-space: nowrap; }
.w40 { width: 40px; } .w130 { width: 130px; } .w140 { width: 140px; } .w150 { width: 150px; } .w160 { width: 160px; } .w170 { width: 170px; } .w200 { width: 200px; }
th { height: 32px; padding: 0 15px 0 16px; border-bottom: 1px solid var(--line); text-align: left; color: var(--grey); position: relative; }
th::after { content: ""; position: absolute; right: 0; top: 7px; height: 18px; border-left: 2px solid #8c8c94; }
th.pale::after { border-color: var(--line); }
th:last-child::after { display: none; }
th div { display: flex; align-items: center; gap: 5px; }
.f { margin-left: auto; }
.clip { overflow: hidden; }
td { height: 34px; padding: 0 0 0 16px; background: #ebfaff; border: solid var(--blue); border-width: 2px 0; overflow: hidden; font-size: 14px; }
td:first-child { border-left-width: 2px; border-radius: 8px 0 0 8px; }
th:first-child { padding: 0 0 0 13px; }
td:first-child { padding: 0 0 0 11px; }
td a { color: var(--blue); }
table input { appearance: none; width: 16px; height: 16px; border-radius: 3px; background: var(--blue); display: block; }
table input::after { content: ""; display: block; width: 5px; height: 9px; margin: 2px 0 0 5px; border: solid #fff; border-width: 0 2px 2px 0; transform: rotate(42deg); }
.run { display: flex; align-items: center; gap: 4px; color: #00802f; font-size: 13px; }
.z { color: var(--blue); margin: 0 2px; }
mark { background: #c0c4c7; color: #414d5c; display: inline-block; }
.hscroll { display: flex; align-items: center; height: 15px; padding: 0 6px 0 5px; color: #8b8b8b; }
.hscroll i { width: 70%; height: 9px; border-radius: 5px; background: #8b8b8b; margin: 0 auto 0 8px; }
.flip { transform: rotate(180deg); }

/* split panel */
.split { flex: 1; min-height: 0; display: flex; background: #fff; }
.detail { flex: 1; min-width: 0; overflow: hidden; padding: 17px 24px 0; }
.dhead { display: flex; align-items: center; height: 24px; color: var(--grey); padding-right: 6px; }
.dhead h2 { font-size: 18px; font-weight: 600; color: var(--ink); margin-right: auto; }
.dhead i { height: 24px; border-left: 1px solid var(--line); margin: 0 15px 0 13px; }
.dtabs { display: flex; margin-top: 22px; border-bottom: 1px solid var(--line); font-size: 15px; font-weight: 700; color: var(--grey); }
.dtabs a { padding: 10px 21px 10px 22px; height: 44px; border-bottom: 4px solid transparent; position: relative; }
.dtabs a + a::before { content: ""; position: absolute; left: 0; top: 7px; height: 28px; border-left: 1px solid var(--line); }
.dtabs .on { color: var(--blue); border-color: var(--blue); border-radius: 2px; margin-left: 2px; padding: 10px 20px 10px 19px; }
.detail h3 { display: flex; align-items: center; font-size: 15px; line-height: 24px; margin: 18px 0 0 2px; }
.detail h3 > svg { margin-right: 8px; }
.detail .info { line-height: 20px; }
.facts { display: grid; grid-template-columns: 529px 541px 1fr; height: 256px; margin-top: 2px; }
.facts dl { padding-top: 10px; }
.facts dl + dl { border-left: 1px solid var(--line); padding-left: 10px; }
.facts dl > div { height: 60px; }
.facts dl > .tall { height: 82px; }
dt { font-weight: 700; height: 20px; white-space: nowrap; }
dd { display: flex; align-items: center; white-space: nowrap; font-size: 14px; }
dd svg { color: var(--blue); margin: 0 8px 0 4px; }
.dns { gap: 1px; }
.green { color: #00802f; }
.green svg { color: inherit; margin: 0 4px 0 0; }

footer { flex: none; display: flex; align-items: center; gap: 28px; height: 31px; padding: 0 16px; background: var(--aws); border-top: 1px solid #424650; color: #ebebf0; font-size: 11px; font-weight: 500; }
footer a { display: flex; align-items: center; gap: 5px; }
footer span { margin-left: auto; color: #b4b4bb; font-size: 12px; font-weight: 400; }

/* PuTTY window floating over the desktop */
.putty { position: absolute; left: 835px; top: 355px; width: 657px; height: 630px; display: flex; flex-direction: column; background: #2c2c2c; color: #e8e8e8; border-radius: 12px 12px 0 0; font-size: 14px; box-shadow: 0 3px 9px 1px rgba(0,0,0,.5); white-space: nowrap; overflow: hidden; }
.putty u { text-decoration-thickness: 2px; text-underline-offset: 3px; text-decoration-skip-ink: none; }
.ptitle { height: 38px; flex: none; display: grid; grid-template-columns: 1fr 22px 22px 22px; gap: 12px; align-items: center; padding: 0 8px 0 110px; background: #212121; border-bottom: 1px solid #000; text-align: center; }
.ptitle button { width: 22px; height: 22px; border-radius: 50%; background: #373737; display: grid; place-items: center; }
.pbody { flex: 1; min-height: 0; display: flex; gap: 4px; padding: 9px 11px 0; }
.pcat { width: 161px; }
.pcat ul { height: 483px; overflow: hidden; margin-top: 3px; background: #262626; border: solid #1e1e1e; border-width: 1px 0; }
.pcat li { display: flex; align-items: center; height: 24px; }
.pcat li:first-child { margin-top: -5px; }
.pcat svg { color: #bbb; margin-left: -17px; margin-right: 7px; }
.l1 { padding-left: 22px; } .l2 { padding-left: 40px; } .l3 { padding-left: 58px; }
.sel { background: #da3450; color: #fff; }
.pform { flex: 1; }
.pform > p { text-align: center; }
fieldset { border: 1px solid #1c1c1c; height: 335px; padding: 2px 4px 0; margin-top: 2px; }
legend { line-height: 20px; margin-left: -5px; }
.opt { display: flex; align-items: center; gap: 4px; height: 26px; padding-left: 4px; }
.opt input { appearance: none; width: 16px; height: 16px; border: 1px solid #1c1c1c; border-radius: 3px; background: #363636; }
.opt input[type=radio] { border-radius: 50%; }
.opt input[type=radio]:checked { border: 6px solid #da3450; background: #fff; }
.prow { display: grid; grid-template-columns: 149px 1fr 112px; column-gap: 4px; align-items: center; height: 34px; margin-bottom: 3px; }
.prow input { grid-column: 2 / 4; height: 34px; width: 100%; padding: 0 8px; border: 1px solid #1a1a1a; border-radius: 6px; background: #212121; }
.prow .short { grid-column: 2; width: 98px; }
.prow button, .pfoot button { grid-column: 3; height: 34px; border: 1px solid #1a1a1a; border-radius: 6px; background: #363636; }
.fwd { margin: 2px 0 4px; }
.fwd > span { align-self: start; }
.plist { height: 66px; padding: 2px 4px; background: #262626; border: 1px solid #1a1a1a; }
.addnew { margin: 3px 0; }
.radios { display: grid; grid-template-columns: 151px 152px 1fr; }
.pfoot { display: flex; gap: 4px; height: 60px; flex: none; padding: 16px 9px 0; border-top: 1px solid #262626; }
.pfoot button { width: 125px; }
.open { margin-left: auto; }
```
